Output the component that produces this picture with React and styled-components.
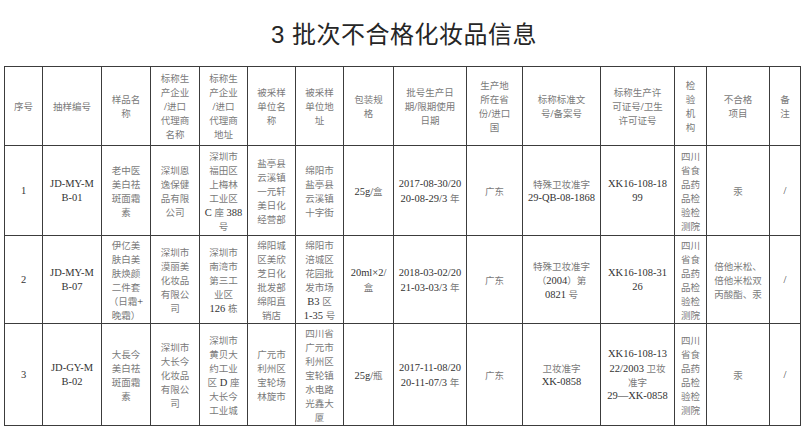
import React from 'react'
import styled, { createGlobalStyle } from 'styled-components'

const GlobalStyle = createGlobalStyle`
  html, body {
    margin: 0;
    padding: 0;
    background: #ffffff;
  }
`

const Page = styled.div`
  width: 808px;
  height: 434px;
  overflow: hidden;
  background: #fff;
  font-family: 'Liberation Serif', 'Noto Sans CJK SC', serif;
`

const Title = styled.h1`
  margin: 0;
  height: 66px;
  padding-top: 20px;
  box-sizing: border-box;
  text-align: center;
  font-family: 'Liberation Sans', 'Noto Sans CJK SC', sans-serif;
  font-weight: 400;
  font-size: 24px;
  line-height: 30px;
  color: #262626;
  letter-spacing: 0.5px;
`

const TableWrap = styled.div`
  padding-left: 4px;
`

const Table = styled.table`
  border-collapse: collapse;
  table-layout: fixed;
  width: 796px;
`

const Row = styled.tr`
  height: ${(props) => props.$h}px;
`

const Cell = styled.td`
  border: 1.5px solid #3c3c3c;
  padding: 0 2px;
  text-align: center;
  vertical-align: middle;
  font-size: 10.5px;
  line-height: 14px;
  color: #333;
  overflow: hidden;
`

const Line = styled.div`
  height: 14px;
  line-height: 14px;
  white-space: nowrap;
  overflow: visible;
`

const Han = styled.span`
  font-family: 'Noto Sans CJK SC', sans-serif;
  font-size: 9.5px;
  line-height: 14px;
  color: #7a7a7a;
`

const widths = [38, 59, 49, 49, 48, 48, 48, 50, 73, 56, 78, 74, 32, 63, 31]

const header = [
  ['序号'],
  ['抽样编号'],
  ['样品名', '称'],
  ['标称生', '产企业', '/进口', '代理商', '名称'],
  ['标称生', '产企业', '/进口', '代理商', '地址'],
  ['被采样', '单位名', '称'],
  ['被采样', '单位地', '址'],
  ['包装规', '格'],
  ['批号生产日', '期/限期使用', '日期'],
  ['生产地', '所在省', '份/进口', '国'],
  ['标称标准文', '号/备案号'],
  ['标称生产许', '可证号/卫生', '许可证号'],
  ['检', '验', '机', '构'],
  ['不合格', '项目'],
  ['备', '注'],
]

const lab = ['四川', '省食', '品药', '品检', '验检', '测院']

const rows = [
  {
    h: 90,
    cells: [
      ['1'],
      ['JD-MY-M', 'B-01'],
      ['老中医', '美白祛', '斑面霜', '素'],
      ['深圳恩', '逸保健', '品有限', '公司'],
      ['深圳市', '福田区', '上梅林', '工业区', 'C 座 388', '号'],
      ['盐亭县', '云溪镇', '一元轩', '美日化', '经营部'],
      ['绵阳市', '盐亭县', '云溪镇', '十字街'],
      ['25g/盒'],
      ['2017-08-30/20', '20-08-29/3 年'],
      ['广东'],
      ['特殊卫妆准字', '29-QB-08-1868'],
      ['XK16-108-18', '99'],
      lab,
      ['汞'],
      ['/'],
    ],
  },
  {
    h: 88,
    cells: [
      ['2'],
      ['JD-MY-M', 'B-07'],
      ['伊亿美', '肤白美', '肤焕颜', '二件套', '（日霜+', '晚霜）'],
      ['深圳市', '漠丽美', '化妆品', '有限公', '司'],
      ['深圳市', '南湾市', '第三工', '业区', '126 栋'],
      ['绵阳城', '区美欣', '芝日化', '批发部', '绵阳直', '销店'],
      ['绵阳市', '涪城区', '花园批', '发市场', 'B3 区', '1-35 号'],
      ['20ml×2/', '盒'],
      ['2018-03-02/20', '21-03-03/3 年'],
      ['广东'],
      ['特殊卫妆准字', '（2004）第', '0821 号'],
      ['XK16-108-31', '26'],
      lab,
      ['倍他米松、', '倍他米松双', '丙酸酯、汞'],
      ['/'],
    ],
  },
  {
    h: 102,
    cells: [
      ['3'],
      ['JD-GY-M', 'B-02'],
      ['大長今', '美白祛', '斑面霜', '素'],
      ['深圳市', '大长今', '化妆品', '有限公', '司'],
      ['深圳市', '黄贝大', '约工业', '区 D 座', '大长今', '工业城'],
      ['广元市', '利州区', '宝轮场', '林旋市'],
      ['四川省', '广元市', '利州区', '宝轮镇', '水电路', '光鑫大', '厦'],
      ['25g/瓶'],
      ['2017-11-08/20', '20-11-07/3 年'],
      ['广东'],
      ['卫妆准字', 'XK-0858'],
      ['XK16-108-13', '22/2003 卫妆', '准字', '29—XK-0858'],
      lab,
      ['汞'],
      ['/'],
    ],
  },
]

// split a line into runs so Chinese can get its own face and tone
const HAN = /([\u3000-\u9fff\uff00-\uffef、]+)/

const renderText = (text) =>
  text
    .split(HAN)
    .filter(Boolean)
    .map((part, i) =>
      /[\u3000-\u9fff\uff00-\uffef、]/.test(part) ? <Han key={i}>{part}</Han> : <span key={i}>{part}</span>
    )

const CellLines = ({ lines }) => (
  <Cell>
    {lines.map((l, i) => (
      <Line key={i}>{renderText(l)}</Line>
    ))}
  </Cell>
)

export default function App() {
  return (
    <Page>
      <GlobalStyle />
      <Title>3 批次不合格化妆品信息</Title>
      <TableWrap>
        <Table>
          <colgroup>
            {widths.map((w, i) => (
              <col key={i} style={{ width: w }} />
            ))}
          </colgroup>
          <tbody>
            <Row $h={79}>
              {header.map((c, i) => (
                <CellLines key={i} lines={c} />
              ))}
            </Row>
            {rows.map((r, ri) => (
              <Row key={ri} $h={r.h}>
                {r.cells.map((c, i) => (
                  <CellLines key={i} lines={c} />
                ))}
              </Row>
            ))}
          </tbody>
        </Table>
      </TableWrap>
    </Page>
  )
}
